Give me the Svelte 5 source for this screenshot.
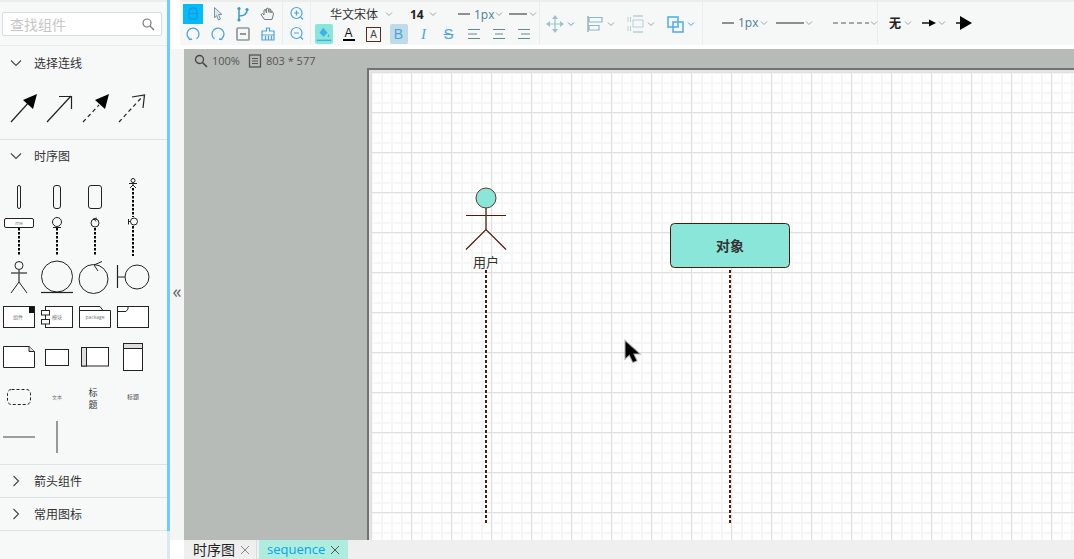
<script>
  // repeated bits of the toolbar
  const formats = ["A", "box", "B", "I", "S"];
</script>

{#snippet chev(cls = "")}
  <svg class="chev {cls}" viewBox="0 0 10 10"><path d="M2 3.5 5 6.5 8 3.5" /></svg>
{/snippet}

<div class="app">
  <aside class="side">
    <div class="search">
      <input placeholder="查找组件" />
      <svg viewBox="0 0 14 14"><circle cx="6" cy="6" r="4" /><path d="M9 9 13 13" /></svg>
    </div>

    <section class="group first">
      <h3>
        <svg viewBox="0 0 12 12"><path d="M1 3.5 6 8.5 11 3.5" /></svg>
        选择连线
      </h3>
      <svg class="shapes" width="152" height="45" viewBox="0 90 152 45">
        <g stroke="#222" fill="none" stroke-width="1.2">
          <path d="M11 123 30 102" />
          <path d="M47 123 71 97M59 97.500H71.500V110" />
          <path d="M83 123 99 106" stroke-dasharray="4 3" />
          <path d="M119 123 143 97" stroke-dasharray="4 3" />
          <path d="M132 98 144.500 96 143 109" />
        </g>
        <path d="M37 95 33 110 23 101Z" fill="#000" />
        <path d="M109 95 105 110 95 101Z" fill="#000" />
      </svg>
    </section>

    <section class="group">
      <h3 class="seq">
        <svg viewBox="0 0 12 12"><path d="M1 3.5 6 8.5 11 3.5" /></svg>
        时序图
      </h3>
      <div class="palette">
        <svg width="152" height="80" viewBox="0 178 152 80">
          <g fill="none" stroke="#222" stroke-width="1">
            <rect x="17.500" y="185.500" width="3" height="23" rx="1.500" />
            <rect x="53.500" y="185.500" width="7" height="23" rx="2.500" />
            <rect x="88.500" y="185.500" width="13" height="23" rx="2.500" />
            <circle cx="133" cy="180.500" r="2" />
            <path d="M129 183.500H137M133 182.500V185M130 188 133 185 136 188" />
            <rect x="4.500" y="218.500" width="29" height="9" rx="1.500" fill="#fff" />
            <circle cx="57" cy="222" r="4.500" />
            <path d="M53 227.500H61" />
            <circle cx="95" cy="223" r="4" />
            <path d="M93 219 97 218M94 219 96 221.500" />
            <circle cx="134" cy="221.500" r="3.500" />
            <path d="M128.500 219V224.500M128.500 221.500H130.500" />
          </g>
          <text x="19" y="225" class="tiny">me</text>
          <g stroke="#000" stroke-width="2" stroke-dasharray="2.500 1.500" fill="none">
            <path d="M19 228V256" /><path d="M57 228V256" /><path d="M95 228V256" />
            <path d="M133 188V217" /><path d="M133 226V256" />
          </g>
        </svg>
        <svg width="152" height="44" viewBox="0 258 152 44">
          <g fill="none" stroke="#222" stroke-width="1">
            <circle cx="19" cy="265.500" r="4" />
            <path stroke="#555" stroke-width="1.500" d="M11 273H27M19 269.500V282" />
            <path d="M11 293 19 282 27 293" />
            <circle cx="57" cy="276.500" r="15.500" />
            <path stroke-width="1.200" d="M41 292.500H73" />
            <circle cx="93.500" cy="279" r="14.500" />
            <path d="M94 265 102 261.500M94 265 98 271" />
            <path stroke-width="1.200" d="M117.500 265V288M118 277H125" />
            <circle cx="137" cy="277" r="12" />
          </g>
        </svg>
        <svg width="152" height="36" viewBox="0 302 152 36">
          <g fill="#fff" stroke="#222" stroke-width="1">
            <rect x="3.500" y="306.500" width="31" height="21" />
            <rect x="45.500" y="306.500" width="27" height="21" />
            <rect x="41.500" y="310.500" width="8" height="4.500" />
            <rect x="41.500" y="319.500" width="8" height="4.500" />
            <path d="M79.500 306.500H100L103 310.500H110.500V327.500H79.500ZM79.500 310.500H103" />
            <rect x="117.500" y="306.500" width="31" height="21" />
            <path d="M117.500 311.500H126L128 309V306.500" fill="none" />
          </g>
          <rect x="29" y="307" width="5" height="6" fill="#111" />
          <text x="18" y="319" class="tiny">组件</text>
          <text x="57" y="319" class="tiny">模块</text>
          <text x="95" y="319" class="tiny">package</text>
        </svg>
        <svg width="152" height="40" viewBox="0 338 152 40">
          <g fill="#fff" stroke="#222" stroke-width="1">
            <path d="M3.500 346.500H29L34.500 351.500V367.500H3.500Z" />
            <path d="M29 346.500V351.500H34.500" fill="#ddd" />
            <rect x="45.500" y="349.500" width="23" height="16" />
            <rect x="81.500" y="347.500" width="27" height="18.500" />
            <rect x="81.500" y="347.500" width="5" height="18.500" fill="#ddd" />
            <rect x="123.500" y="343.500" width="19" height="27" />
            <rect x="123.500" y="343.500" width="19" height="5" fill="#ddd" />
          </g>
        </svg>
        <svg width="152" height="36" viewBox="0 378 152 36">
          <rect x="7.500" y="389.500" width="23" height="15" rx="4" fill="none" stroke="#222" stroke-dasharray="3 2" />
          <text x="57" y="399" class="tiny">文本</text>
          <text x="93" y="396" class="title">标</text>
          <text x="93" y="408" class="title">题</text>
          <text x="133" y="399" class="tiny dark">标题</text>
        </svg>
        <svg width="152" height="44" viewBox="0 414 152 44">
          <path d="M3 437H35M57 421V453" stroke="#808080" stroke-width="1.600" />
        </svg>
      </div>
    </section>

    <section class="group closed">
      <h3><svg viewBox="0 0 12 12"><path d="M3.500 1 8.500 6 3.500 11" /></svg>箭头组件</h3>
    </section>
    <section class="group closed">
      <h3><svg viewBox="0 0 12 12"><path d="M3.500 1 8.500 6 3.500 11" /></svg>常用图标</h3>
    </section>
  </aside>

  <div class="scrollbar"></div>

  <main class="main">
    <header class="toolbar">
      <div class="tools">
        <div class="cell">
          <span class="on">
            <svg class="ico" viewBox="0 0 20 20">
              <path d="M6 8a4 4 0 0 1 8 0v5a2 2 0 0 1-2 2H8a2 2 0 0 1-2-2ZM5 9.500H15M7 4 8 6M13 4 12 6" fill="none" stroke="#1f9ad6" stroke-width="1.300" />
            </svg>
          </span>
        </div>
        <div class="cell">
          <svg class="ico" viewBox="0 0 20 20"><path d="M6.500 3.500 14 10.500H10.500L12.500 15 10.500 16 8.500 11.500 6.500 14Z" fill="#dfe6ea" stroke="#7d96a5" /></svg>
        </div>
        <div class="cell">
          <svg class="ico" viewBox="0 0 20 20"><path d="M6 5V16M6 12C10 12 14 11 14 6" fill="none" stroke="#3b9cc4" stroke-width="1.500" /><circle cx="6" cy="4.500" r="1.600" fill="#3b9cc4" /><circle cx="14" cy="5.500" r="1.600" fill="#3b9cc4" /><circle cx="6" cy="16" r="1.600" fill="#3b9cc4" /></svg>
        </div>
        <div class="cell">
          <svg class="ico" viewBox="0 0 20 20"><path d="M6 15 3 10.500 4.500 9.500 6 11V6L7.500 5.500 8.500 9V4.500L10 4 11 8.500V5L12.500 5 13 9V7L14.500 7.500 15.500 10 14 15.500H7Z" fill="#f2f4f4" stroke="#707a7a" /></svg>
        </div>
        <div class="cell">
          <svg class="ico" viewBox="0 0 20 20"><path d="M6.500 15A6 6 0 1 1 13.500 15M5 12.500 6.500 15.500 9 15" fill="none" stroke="#4ba3e0" stroke-width="1.300" /></svg>
        </div>
        <div class="cell">
          <svg class="ico" viewBox="0 0 20 20"><path d="M6.500 15A6 6 0 1 1 13.500 15M15 12.500 13.500 15.500 11 15" fill="none" stroke="#4ba3e0" stroke-width="1.300" /></svg>
        </div>
        <div class="cell">
          <svg class="ico" viewBox="0 0 20 20"><rect x="4" y="4" width="12" height="12" rx="1" fill="none" stroke="#8b9a9a" stroke-width="1.700" /><path d="M7 10H13" stroke="#6f7d7d" stroke-width="1.500" /></svg>
        </div>
        <div class="cell">
          <svg class="ico" viewBox="0 0 20 20"><path d="M8.500 7V4H11.500V7H16V16H4V7ZM4 11H16M7.500 12V16M10.500 12V16M13.500 12V16" fill="none" stroke="#4ba3e0" stroke-width="1.200" /></svg>
        </div>
      </div>

      <div class="tools zoom">
        <div class="cell">
          <svg class="ico" viewBox="0 0 20 20"><circle cx="9.500" cy="9" r="5.500" fill="none" stroke="#4ba3e0" stroke-width="1.200" /><path d="M13.500 13 16 15.500M7 9H12M9.500 6.500V11.500" stroke="#4ba3e0" stroke-width="1.200" /></svg>
        </div>
        <div class="cell">
          <svg class="ico" viewBox="0 0 20 20"><circle cx="9.500" cy="9" r="5.500" fill="none" stroke="#4ba3e0" stroke-width="1.200" /><path d="M13.500 13 16 15.500M7 9H12" stroke="#4ba3e0" stroke-width="1.200" /></svg>
        </div>
      </div>

      <div class="format">
        <div class="row top">
          <span class="font-name">华文宋体</span>
          {@render chev("c1")}
          <span class="size">14</span>
          {@render chev("c2")}
          <svg class="ln" width="12" height="6"><path d="M0 3H12" /></svg>
          <span class="px">1px</span>
          {@render chev()}
          <svg class="ln wide" width="18" height="6"><path d="M0 3H18" /></svg>
          {@render chev()}
        </div>
        <div class="row">
          <div class="cell">
            <span class="fill">
              <svg class="ico" viewBox="0 0 20 20"><path d="M9 3 14 8.500 9.500 13 5 8.500Z" fill="#45aee6" /><path d="M15 10C16 12 16.500 13 15 13.500 13.500 13 14 12 15 10Z" fill="#45aee6" /><path d="M2 17H18" stroke="#45aee6" stroke-width="1.500" /></svg>
            </span>
          </div>
          {#each formats as f}
            <div class="cell">
              {#if f === "A"}
                <span class="letter under">A</span>
              {:else if f === "box"}
                <span class="letter boxed">A</span>
              {:else if f === "B"}
                <span class="active">B</span>
              {:else if f === "I"}
                <span class="letter italic">I</span>
              {:else}
                <span class="letter strike">S</span>
              {/if}
            </div>
          {/each}
          <div class="cell">
            <svg class="ico" viewBox="0 0 20 20"><path d="M4 5.500H16M4 10H13M4 14.500H16" stroke="#5f8a92" stroke-width="1.200" /></svg>
          </div>
          <div class="cell">
            <svg class="ico" viewBox="0 0 20 20"><path d="M4 5.500H16M6 10H14M4 14.500H16" stroke="#5f8a92" stroke-width="1.200" /></svg>
          </div>
          <div class="cell">
            <svg class="ico" viewBox="0 0 20 20"><path d="M4 5.500H16M7 10H16M4 14.500H16" stroke="#5f8a92" stroke-width="1.200" /></svg>
          </div>
        </div>
      </div>

      <div class="arrange">
        <div class="item">
          <svg class="ico" viewBox="0 0 20 20"><path d="M10 3V17M3 10H17" stroke="#9dc4c9" stroke-width="1.200" /><path d="M10 1 13 5H7ZM10 19 7 15H13ZM1 10 5 7V13ZM19 10 15 13V7Z" fill="#9dc4c9" /></svg>
          {@render chev("blue")}
        </div>
        <div class="item">
          <svg class="ico" viewBox="0 0 20 20"><path d="M3 2V18" stroke="#8fb8bf" stroke-width="1.500" /><path d="M4 3.500H17V8H4ZM4 11.500H14V16H4Z" fill="none" stroke="#8fb8bf" stroke-width="1.200" /></svg>
          {@render chev()}
        </div>
        <div class="item">
          <svg class="ico" viewBox="0 0 20 20"><path d="M8 2H18M8 18H18" stroke="#b5d0d5" stroke-width="1.300" /><rect x="8" y="6" width="10" height="7" fill="none" stroke="#b5d0d5" /><path d="M3 3V17M5.500 3V17" stroke="#b5d0d5" stroke-dasharray="5 4" /></svg>
          {@render chev()}
        </div>
        <div class="item">
          <svg class="ico" viewBox="0 0 20 20"><rect x="3" y="3" width="10" height="10" fill="none" stroke="#5aaee6" stroke-width="1.600" /><rect x="8" y="8" width="10" height="10" fill="none" stroke="#5aaee6" stroke-width="1.600" /></svg>
          {@render chev("blue")}
        </div>
      </div>

      <div class="lines">
        <svg class="ln" width="12" height="6"><path d="M0 3H12" /></svg>
        <span class="px">1px</span>
        {@render chev()}
        <svg class="ln solid" width="28" height="6"><path d="M0 3H28" /></svg>
        {@render chev()}
        <svg class="ln dashed" width="36" height="6"><path d="M0 3H36" /></svg>
        {@render chev()}
      </div>

      <div class="arrows">
        <span class="none">无</span>
        {@render chev()}
        <svg class="arrow-a" width="14" height="10" viewBox="0 0 14 10"><path d="M0 5H8" stroke="#111" stroke-width="1.500" /><path d="M7 1.500 14 5 7 8.500Z" fill="#000" /></svg>
        {@render chev()}
        <svg class="arrow-b" width="16" height="14" viewBox="0 0 16 14"><path d="M0 7H6" stroke="#111" stroke-width="1.500" /><path d="M4 0 16 7 4 14Z" fill="#000" /></svg>
      </div>
    </header>

    <div class="body">
      <div class="collapse">«</div>
      <div class="work">
        <div class="status">
          <svg width="14" height="14" viewBox="0 0 14 14"><circle cx="5.500" cy="5.500" r="4" fill="none" stroke="#444" stroke-width="1.300" /><path d="M8.500 8.500 13 13" stroke="#444" stroke-width="1.600" /></svg>
          <span>100%</span>
          <svg class="frame" width="14" height="14" viewBox="0 0 14 14"><rect x="1.500" y="1" width="11" height="12" fill="none" stroke="#555" stroke-width="1.300" /><path d="M4 4.500H10M4 7H10M4 9.500H10" stroke="#555" /></svg>
          <span>803 * 577</span>
        </div>
        <div class="paper">
          <svg class="diagram" width="703" height="468" viewBox="369 70 703 468">
            <circle cx="486" cy="198" r="10" fill="#8ae6d9" stroke="#5b3a30" />
            <path d="M466 215.500H506" stroke="#4d1a0a" />
            <path d="M486 208V229.500" stroke="#5b3a30" stroke-width="1.500" />
            <path d="M466 249.500 486 229.500 506 249.500" fill="none" stroke="#4d1a0a" stroke-width="1.200" />
            <text x="486" y="267" class="label">用户</text>
            <path d="M486 270V523M730 270V523" stroke="#54160a" stroke-width="2" stroke-dasharray="3 2" />
            <rect x="670.500" y="223.500" width="119" height="44" rx="4" fill="#8ae6d9" stroke="#4d1a0a" />
            <text x="730" y="251" class="label bold">对象</text>
            <path d="M625.500 341.500V358L629.500 354.500 633 362 636.500 360.500 633 353.500H639Z" fill="#000" stroke="#aaa" stroke-width="2" paint-order="stroke" />
          </svg>
        </div>
      </div>
    </div>

    <footer class="tabs">
      <div class="tab">
        时序图
        <svg viewBox="0 0 10 10"><path d="M1 1 9 9M9 1 1 9" /></svg>
      </div>
      <div class="tab current">
        sequence
        <svg viewBox="0 0 10 10"><path d="M1 1 9 9M9 1 1 9" /></svg>
      </div>
    </footer>
  </main>
</div>

<style>
  :global(body) {
    margin: 0;
    background: #fff;
    overflow: hidden;
  }
  .app {
    display: flex;
    height: 559px;
    width: 1074px;
    overflow: hidden;
    font-family: "Open Sans", "Noto Sans CJK SC", sans-serif;
    color: #333;
  }

  /* left palette */
  .side {
    width: 167px;
    flex: none;
    background: #f7f9f9;
    border-top: 2px solid #eceeee;
    box-sizing: border-box;
  }
  .scrollbar {
    width: 3px;
    flex: none;
    background: linear-gradient(#6ccbff 531px, #d8eaf6 531px);
  }
  .search {
    position: relative;
    height: 44px;
    box-sizing: border-box;
    padding: 10px 6px 0 2px;
    border-bottom: 1px solid #e9ecec;
  }
  .search input {
    display: block;
    box-sizing: border-box;
    width: 160px;
    height: 24px;
    padding: 0 7px;
    border: 1px solid #d9dddd;
    border-radius: 2px;
    background: #fff;
    font: 14px "Noto Sans CJK SC", sans-serif;
    outline: none;
  }
  .search input::placeholder {
    color: #c6c6c6;
  }
  .search svg {
    position: absolute;
    right: 12px;
    top: 15px;
    width: 14px;
    height: 14px;
    fill: none;
    stroke: #777;
    stroke-width: 1.2;
  }
  .group {
    border-bottom: 1px solid #dfe2e2;
  }
  .group.first {
    height: 94px;
    box-sizing: border-box;
  }
  .group h3 {
    display: flex;
    align-items: center;
    gap: 12px;
    height: 34px;
    margin: 0;
    padding-left: 10px;
    font-size: 12px;
    font-weight: 400;
    color: #333;
  }
  .group h3.seq {
    height: 32px;
  }
  .group h3 svg {
    width: 12px;
    height: 12px;
    fill: none;
    stroke: #444;
    stroke-width: 1.1;
  }
  .shapes {
    display: block;
    margin-top: 9px;
  }
  .palette {
    display: flex;
    flex-direction: column;
    padding-top: 6px;
    height: 292px;
    box-sizing: border-box;
  }
  .palette svg {
    display: block;
    flex: none;
  }
  .closed {
    height: 33px;
    box-sizing: border-box;
  }
  .closed h3 {
    height: 32px;
  }
  .tiny {
    font-size: 5px;
    fill: #777;
    text-anchor: middle;
  }
  .tiny.dark {
    fill: #444;
    font-size: 6px;
  }
  .title {
    font-size: 9px;
    fill: #333;
    text-anchor: middle;
  }

  /* right side */
  .main {
    flex: 1;
    min-width: 0;
    display: flex;
    flex-direction: column;
  }
  .toolbar {
    display: flex;
    height: 45px;
    box-sizing: border-box;
    margin-left: 10px;
    background: #f6f8f8;
    border-top: 2px solid #eceeee;
    font-size: 12px;
  }
  .tools {
    display: grid;
    grid-template-columns: repeat(4, 25px);
    grid-auto-rows: 20px;
    width: 103px;
    box-sizing: border-box;
    padding-top: 2px;
    border-right: 1px solid #e8eded;
  }
  .tools.zoom {
    grid-template-columns: 27px;
    width: 28px;
  }
  .cell {
    display: flex;
    align-items: center;
    justify-content: center;
    height: 20px;
  }
  .ico {
    display: block;
    width: 20px;
    height: 20px;
    flex: none;
  }
  .on {
    display: block;
    width: 20px;
    height: 20px;
    background: #00bcff;
  }
  .format {
    width: 229px;
    flex: none;
    padding-top: 2px;
    box-sizing: border-box;
    border-right: 1px solid #e8eded;
  }
  .row {
    display: flex;
    align-items: center;
    height: 20px;
  }
  .row .cell {
    width: 25px;
    flex: none;
  }
  .top {
    padding-left: 19px;
  }
  .font-name {
    width: 48px;
    margin-right: 6px;
    letter-spacing: 0;
    color: #333;
  }
  .size {
    margin-left: 16px;
    width: 14px;
    font-weight: 700;
    color: #222;
  }
  .px {
    width: 20px;
    margin-left: 4px;
    color: #4a7f96;
  }
  .chev {
    width: 10px;
    height: 10px;
    flex: none;
    fill: none;
    stroke: #9aa3a3;
    stroke-width: 1;
  }
  .chev.blue {
    stroke: #4ba3e0;
  }
  .chev.c2 {
    margin-left: 4px;
  }
  .ln {
    flex: none;
    stroke: #555;
    stroke-width: 1.3;
  }
  .row .ln {
    margin-left: 20px;
  }
  .row .ln.wide {
    margin-left: 5px;
    margin-right: 1px;
  }
  .fill {
    display: block;
    width: 18px;
    height: 20px;
    background: #8ae6d9;
    border-radius: 2px;
  }
  .fill .ico {
    width: 18px;
  }
  .letter {
    width: 16px;
    text-align: center;
    line-height: 14px;
    font-size: 12px;
    font-family: "Liberation Sans", sans-serif;
    color: #111;
  }
  .under {
    border-bottom: 2px solid #000;
    width: 12px;
    line-height: 12px;
  }
  .boxed {
    width: 13px;
    height: 13px;
    line-height: 13px;
    border: 1px solid #5a2a1c;
    font-size: 10px;
    color: #444;
  }
  .italic {
    font-family: "Liberation Serif", serif;
    font-style: italic;
    font-size: 15px;
    color: #4ba3e0;
  }
  .strike {
    font-size: 15px;
    color: #4ba3e0;
    text-decoration: line-through;
  }
  .active {
    width: 18px;
    height: 20px;
    text-align: center;
    background: #c0dbe8;
    border-radius: 2px;
    color: #4ba3e0;
    font: 14px/20px "Liberation Sans", sans-serif;
  }
  .arrange {
    display: flex;
    align-items: center;
    width: 163px;
    flex: none;
    padding-left: 5px;
    box-sizing: border-box;
    border-right: 1px solid #e8eded;
  }
  .item {
    display: flex;
    align-items: center;
    gap: 1px;
    width: 40px;
    flex: none;
  }
  .lines {
    display: flex;
    align-items: center;
    width: 175px;
    flex: none;
    padding: 0 0 2px 19px;
    box-sizing: border-box;
    border-right: 1px solid #e8eded;
  }
  .lines .solid {
    margin-left: 7px;
  }
  .lines .dashed {
    margin-left: 19px;
    stroke-dasharray: 5 3;
    stroke-width: 1;
  }
  .lines .px {
    margin-right: 1px;
  }
  .arrows {
    display: flex;
    align-items: center;
    padding: 0 0 2px 11px;
  }
  .none {
    font-size: 12px;
    font-weight: 700;
    color: #222;
    width: 13px;
    margin-right: 1px;
  }
  .arrow-a {
    margin-left: 9px;
    margin-right: 1px;
  }
  .arrow-b {
    margin-left: 9px;
  }
  .body {
    flex: 1;
    min-height: 0;
    display: flex;
    margin-top: 4px;
  }
  .collapse {
    width: 14px;
    flex: none;
    background: #f4f6f6;
    text-align: center;
    font: 18px/1 "Open Sans", sans-serif;
    color: #666;
    padding-top: 233px;
    box-sizing: border-box;
  }
  .work {
    position: relative;
    flex: 1;
    min-width: 0;
    overflow: hidden;
    background: #b6bbb8;
    padding: 19px 0 0 183px;
    box-sizing: border-box;
  }
  .status {
    position: absolute;
    left: 10px;
    top: 4px;
    display: flex;
    align-items: center;
    gap: 4px;
    font-size: 11px;
    color: #555;
  }
  .status .frame {
    margin-left: 4px;
  }
  .paper {
    width: 803px;
    height: 577px;
    border: solid #6f7371;
    border-width: 2px 0 0 2px;
    box-shadow: inset 2px 2px 0 #e4e4e4;
    background-color: #fff;
    background-image:
      linear-gradient(#e0e0e0 1px, transparent 1px),
      linear-gradient(90deg, #e0e0e0 1px, transparent 1px),
      linear-gradient(#f6f6f6 2px, transparent 2px),
      linear-gradient(90deg, #f6f6f6 2px, transparent 2px);
    background-size: 40px 40px, 40px 40px, 10px 10px, 10px 10px;
    background-position: 2px 2px, 2px 2px, 2px 2px, 2px 2px;
  }
  .diagram {
    display: block;
  }
  .label {
    font-size: 13px;
    fill: #333;
    text-anchor: middle;
  }
  .label.bold {
    font-size: 14px;
    font-weight: 700;
  }
  .tabs {
    display: flex;
    height: 19px;
    flex: none;
    margin-left: 14px;
    background: #efefef;
    font-size: 14px;
    line-height: 19px;
  }
  .tab {
    display: flex;
    align-items: center;
    gap: 5px;
    width: 73px;
    box-sizing: border-box;
    padding-left: 9px;
    color: #222;
    border-right: 1px solid #dcdcdc;
    margin-right: 2px;
  }
  .tab svg {
    width: 10px;
    height: 10px;
    flex: none;
    fill: none;
    stroke: #888;
    stroke-width: 1;
  }
  .tab.current {
    width: 89px;
    padding-left: 8px;
    font-size: 13px;
    background: #aeeddd;
    color: #00a5f0;
    border: 0;
  }
  .tab.current svg {
    stroke: #555;
  }
</style>
